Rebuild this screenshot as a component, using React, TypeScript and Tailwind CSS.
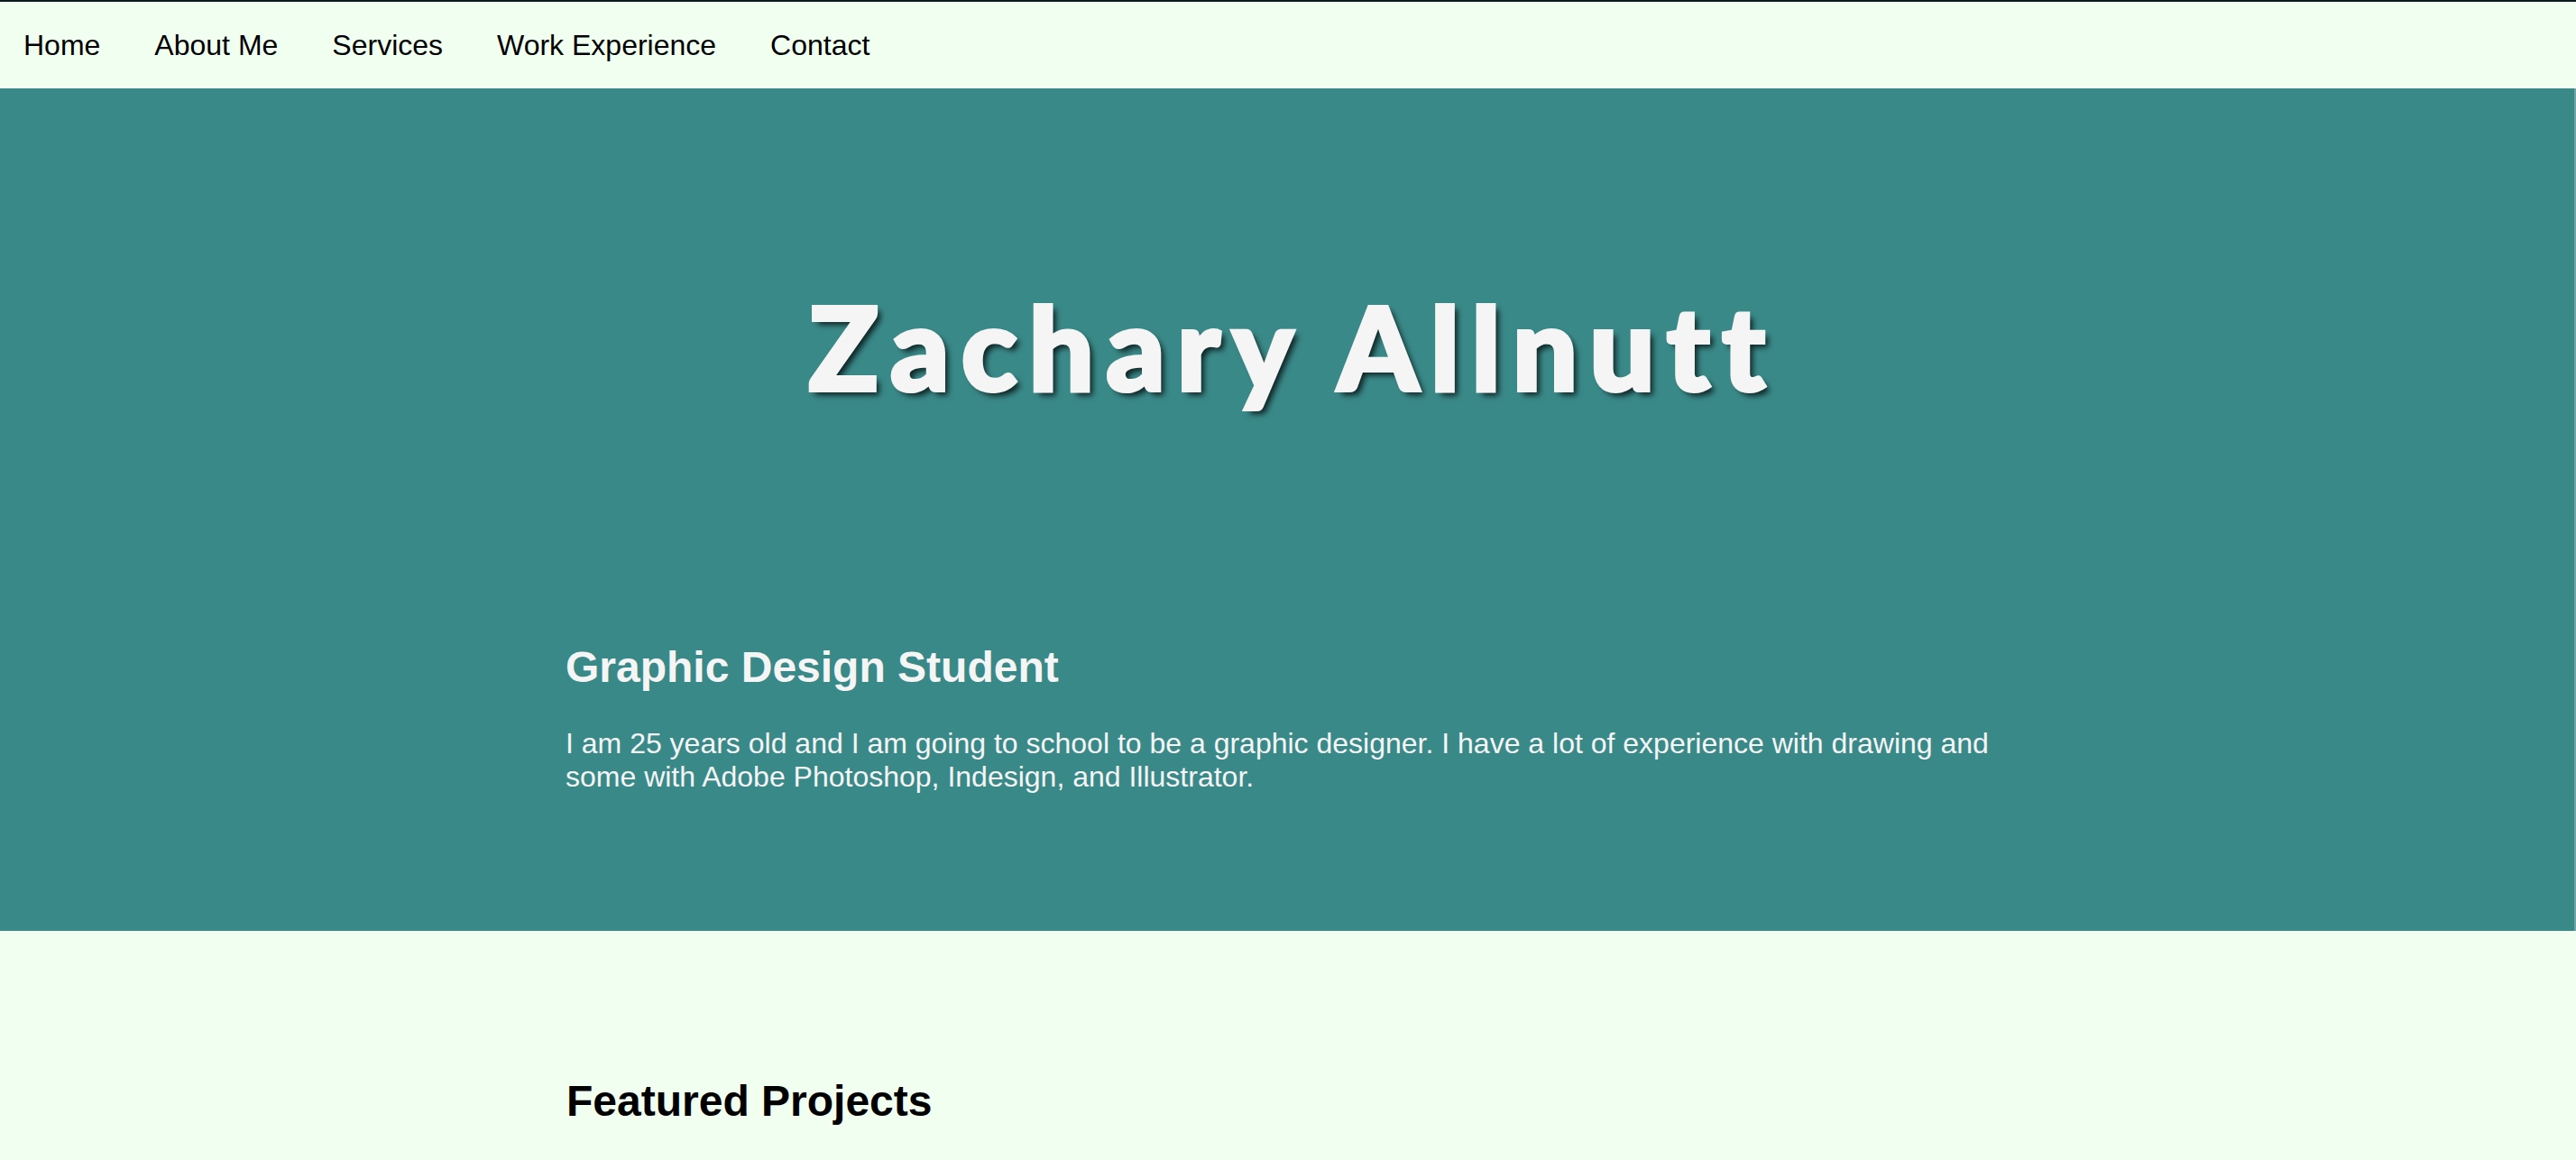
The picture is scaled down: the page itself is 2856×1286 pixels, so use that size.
const links = ["Home", "About Me", "Services", "Work Experience", "Contact"];

const App = () => {
  return (
    <div className="min-h-screen bg-[#f0fff0] font-['Liberation_Sans',Arial,sans-serif]">
      {/* top nav */}
      <nav className="border-t-2 border-[#0c1b1f] h-[98px] flex items-center pl-[26px] gap-[60px] text-[32px] text-black">
        {links.map((l) => (
          <a key={l} href="#" className="leading-[1.15]">
            {l}
          </a>
        ))}
      </nav>

      {/* hero */}
      <header className="bg-[#3a8989] border-r-2 border-[#6fa5a5] pt-[222px] pb-[152px] text-[#f5f5f5]">
        <h1 className="text-center text-[128px] leading-none font-black tracking-[13px] pl-[13px] font-['Lato',sans-serif] [-webkit-text-stroke:4px_#f5f5f5] [text-shadow:5px_5px_6px_rgba(0,0,0,0.75)]">
          Zachary Allnutt
        </h1>
        <div className="w-[1600px] mx-auto mt-[264px]">
          <h2 className="text-[48px] font-bold leading-[1.15]">Graphic Design Student</h2>
          <p className="mt-[39px] text-[32px] leading-[1.15]">
            I am 25 years old and I am going to school to be a graphic designer. I have a lot of experience with drawing
            and some with Adobe Photoshop, Indesign, and Illustrator.
          </p>
        </div>
      </header>

      {/* projects */}
      <section className="w-[1600px] mx-auto pt-[161px] pb-20">
        <h2 className="text-[48px] font-bold leading-[1.15] text-black">Featured Projects</h2>
      </section>
    </div>
  );
};

export default App;
